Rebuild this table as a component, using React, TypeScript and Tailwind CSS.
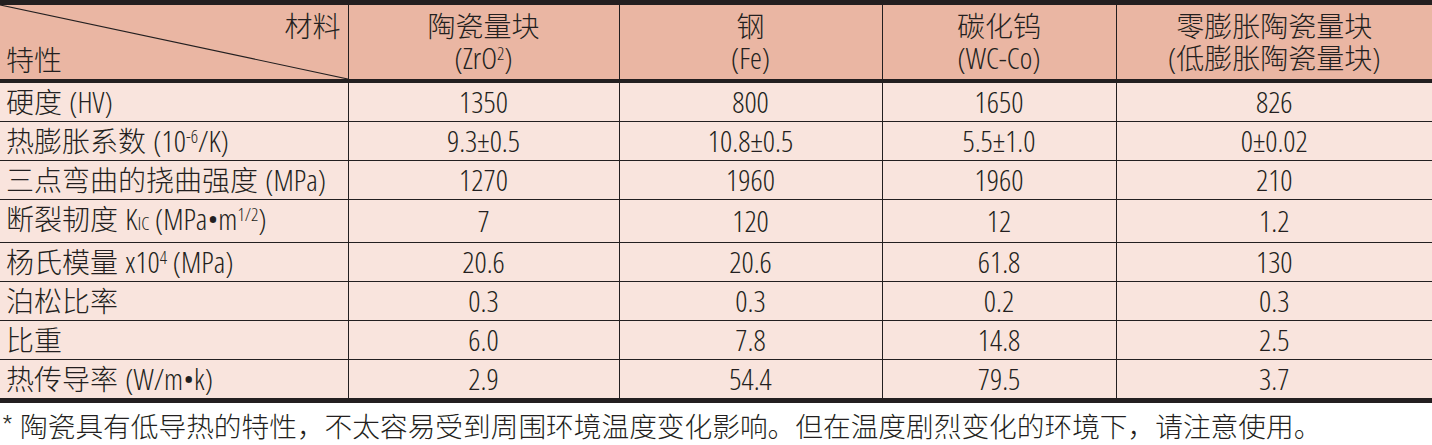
import type { ReactNode } from "react";

// Latin runs use condensed Open Sans, slightly larger than the CJK text
function L({ children }: { children: ReactNode }) {
  return <span className="text-[30px] font-stretch-condensed">{children}</span>;
}

function Sup({ children }: { children: ReactNode }) {
  return <sup className="text-[18px] font-stretch-condensed">{children}</sup>;
}

const rows: { label: ReactNode; values: string[] }[] = [
  { label: <>硬度 <L>(HV)</L></>, values: ["1350", "800", "1650", "826"] },
  {
    label: (
      <>
        热膨胀系数 <L>(10<Sup>-6</Sup>/K)</L>
      </>
    ),
    values: ["9.3±0.5", "10.8±0.5", "5.5±1.0", "0±0.02"],
  },
  { label: <>三点弯曲的挠曲强度 <L>(MPa)</L></>, values: ["1270", "1960", "1960", "210"] },
  {
    label: (
      <>
        断裂韧度{" "}
        <L>
          K<span className="text-[19px]">IC</span> (MPa•m<Sup>1/2</Sup>)
        </L>
      </>
    ),
    values: ["7", "120", "12", "1.2"],
  },
  {
    label: (
      <>
        杨氏模量{" "}
        <L>
          x10<Sup>4</Sup> (MPa)
        </L>
      </>
    ),
    values: ["20.6", "20.6", "61.8", "130"],
  },
  { label: "泊松比率", values: ["0.3", "0.3", "0.2", "0.3"] },
  { label: "比重", values: ["6.0", "7.8", "14.8", "2.5"] },
  { label: <>热传导率 <L>(W/m•k)</L></>, values: ["2.9", "54.4", "79.5", "3.7"] },
];

const heads: { name: string; sub: ReactNode }[] = [
  { name: "陶瓷量块", sub: <L>(ZrO<Sup>2</Sup>)</L> },
  { name: "钢", sub: <L>(Fe)</L> },
  { name: "碳化钨", sub: <L>(WC-Co)</L> },
  { name: "零膨胀陶瓷量块", sub: <><L>(</L>低膨胀陶瓷量块<L>)</L></> },
];

const widths = ["w-[271px]", "w-[263px]", "w-[234px]", "w-[316px]"];

export default function App() {
  return (
    <div className="w-[1432px] h-[445px] bg-white text-[#231f20] text-[28px] font-light font-['Open_Sans','Noto_Sans_CJK_SC',sans-serif]">
      <table className="w-[1432px] table-fixed border-collapse">
        <thead>
          <tr className="bg-[#eab6a3] border-t-[5px] border-b-[4px] border-[#231f20]">
            <th className="w-[348px] h-[74px] p-0 relative font-light border-r-[1.5px] border-[#231f20]">
              <svg className="absolute inset-0" width="348" height="74" viewBox="0 0 348 74">
                <line x1="0" y1="0" x2="348" y2="74" stroke="#231f20" strokeWidth="1.2" />
              </svg>
              <div className="relative h-[74px] flex flex-col justify-between pl-[6px] pr-[7px] pt-[4px] pb-[2px] leading-[34px]">
                <span className="self-end">材料</span>
                <span className="self-start">特性</span>
              </div>
            </th>
            {heads.map((h, i) => (
              <th
                key={i}
                className={`${widths[i]} p-0 font-light text-center leading-[31px] border-r-[1.5px] last:border-r-0 border-[#231f20]`}
              >
                <div>{h.name}</div>
                <div>{h.sub}</div>
              </th>
            ))}
          </tr>
        </thead>
        <tbody className="bg-[#f9e4dd]">
          {rows.map((r, i) => (
            <tr key={i} className="border-b border-[#231f20] last:border-b-[5px]">
              <td className="h-[38px] p-0 pl-[6px] leading-[38px] whitespace-nowrap border-r-[1.5px] border-[#231f20]">
                {r.label}
              </td>
              {r.values.map((v, j) => (
                <td
                  key={j}
                  className="h-[38px] p-0 text-center leading-[38px] text-[30px] font-stretch-condensed border-r-[1.5px] last:border-r-0 border-[#231f20]"
                >
                  {v}
                </td>
              ))}
            </tr>
          ))}
        </tbody>
      </table>
      <p className="pl-[2px] pt-[3px] leading-[40px] text-[27.7px] whitespace-nowrap">
        <L>*</L> 陶瓷具有低导热的特性，不太容易受到周围环境温度变化影响。但在温度剧烈变化的环境下，请注意使用。
      </p>
    </div>
  );
}
